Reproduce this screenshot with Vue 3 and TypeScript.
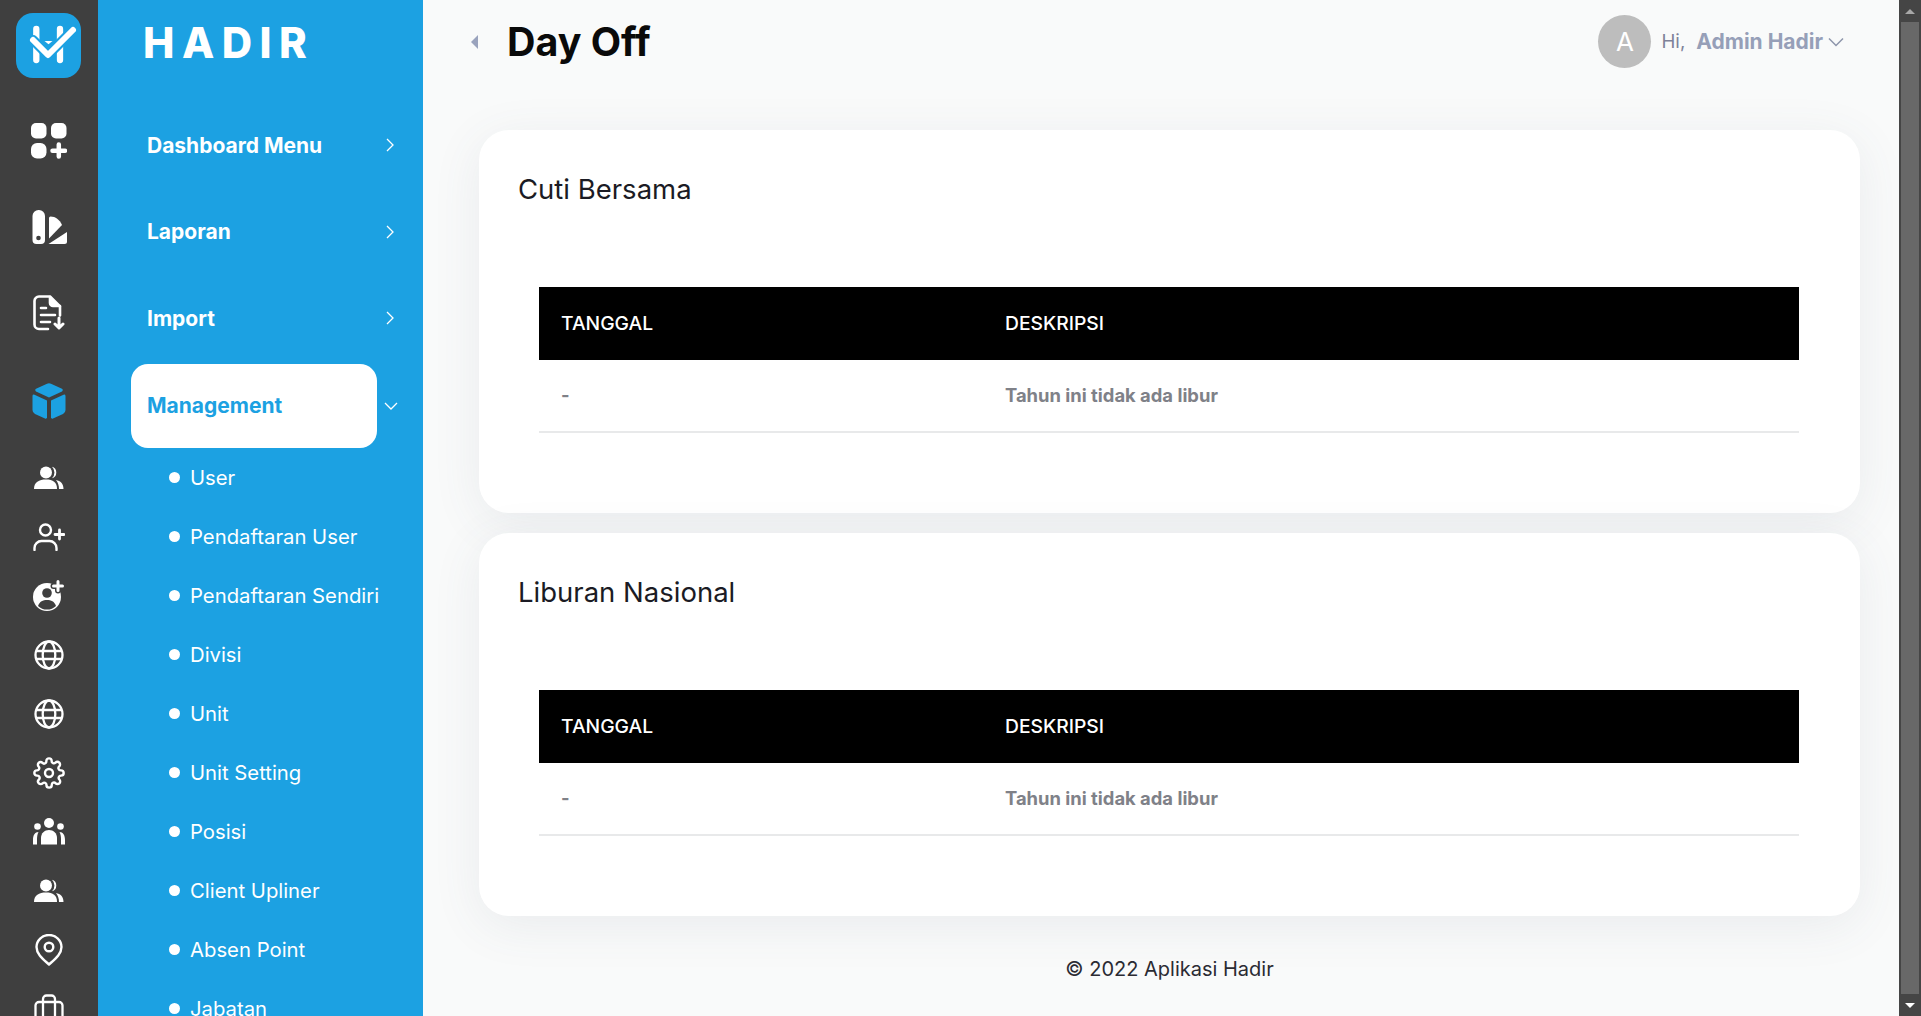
<script setup lang="ts">
const subItems: string[] = ['User','Pendaftaran User','Pendaftaran Sendiri','Divisi','Unit','Unit Setting','Posisi','Client Upliner','Absen Point','Jabatan']
const topItems: string[] = ['Dashboard Menu','Laporan','Import']
const cards: string[] = ['Cuti Bersama','Liburan Nasional']
</script>

<template>
  <div class="app">
    <nav class="rail">
      <div class="logo">
        <svg width="65" height="65" viewBox="0 0 65 65">
          <rect width="65" height="65" rx="17" fill="#1ca1e2"/>
          <path d="M20.300 16V47M44 16V47" stroke="#fff" stroke-width="6.300" stroke-linecap="round" fill="none"/>
          <path d="M28.500 28h8l-4 3.200z" fill="#fff"/>
          <path d="M17 27L32 42L57 17" stroke="#1ca1e2" stroke-width="10" stroke-linecap="round" stroke-linejoin="round" fill="none"/>
          <path d="M17 27L32 42L57 17" stroke="#fff" stroke-width="6" stroke-linecap="round" stroke-linejoin="round" fill="none"/>
        </svg>
      </div>
      <div class="rail-big">
        <svg width="36" height="36" viewBox="0 0 36 36" fill="#fff"><rect x="0" y="0" width="15.500" height="15.500" rx="5"/><rect x="20" y="0" width="15.500" height="15.500" rx="5"/><rect x="0" y="20" width="15.500" height="15.500" rx="6"/><path d="M27.800 21.500v12M21.500 27.700h12.500" stroke="#fff" stroke-width="4.500" stroke-linecap="round"/></svg>
      </div>
      <div class="rail-big">
        <svg width="36" height="36" viewBox="0 0 36 36" fill="#fff"><path d="M7.500 1h.500a6 6 0 0 1 6 6v24a4 4 0 0 1 -4 4H5.500a4 4 0 0 1 -4 -4V7a6 6 0 0 1 6 -6z"/><circle cx="7.500" cy="29" r="2.300" fill="#3f3f3f"/><path d="M18 9a1.500 1.500 0 0 1 1.500 -1.500c5 0 9 3 11.500 8.500L18 29.500z"/><path d="M36 23L17.500 35H33.500a2.500 2.500 0 0 0 2.500 -2.500z"/></svg>
      </div>
      <div class="rail-big">
        <svg width="32" height="36" viewBox="0 0 32 36" fill="none" stroke="#fff" stroke-width="2.600" stroke-linecap="round" stroke-linejoin="round"><path d="M15 34H6a4.500 4.500 0 0 1 -4.500 -4.500V6A4.500 4.500 0 0 1 6 1.500h11l10 10v9"/><path d="M17 2v6a3 3 0 0 0 3 3h7" fill="#fff"/><path d="M8 13h5M8 20h14M8 27h9"/><path d="M26 23v9M22 29l4 4 4 -4" stroke-width="3"/></svg>
      </div>
      <div class="rail-cube">
        <svg width="34" height="36" viewBox="0 0 34 36" fill="#1ca1e2"><path d="M15 .800a4.500 4.500 0 0 1 4 0l11 5a1.500 1.500 0 0 1 0 2.600L17 14.500 4 8.400a1.500 1.500 0 0 1 0 -2.600z"/><path d="M.500 13a1.500 1.500 0 0 1 2 -1.300L15 17.500v16.800a1.500 1.500 0 0 1 -2 1.300L3 31a4.500 4.500 0 0 1 -2.500 -4z"/><path d="M33.500 13a1.500 1.500 0 0 0 -2 -1.300L19 17.500v16.800a1.500 1.500 0 0 0 2 1.300L31 31a4.500 4.500 0 0 0 2.500 -4z"/></svg>
      </div>
      <div class="rail-icons">
        <div class="rail-item"><svg width="30" height="24" viewBox="0 0 30 24" fill="#fff"><circle cx="12" cy="6.500" r="6"/><path d="M0 23c0 -7 5 -9.500 12 -9.500S23 16 23 23z"/><path d="M18 .800a6 6 0 0 1 0 11.500 8 8 0 0 0 0 -11.500z"/><path d="M22 14c4.500 1 7.500 3.500 7.500 9H25c0 -3.500 -1 -6.500 -3 -9z"/></svg></div>
        <div class="rail-item"><svg width="32" height="28" viewBox="0 0 32 28" fill="none" stroke="#fff" stroke-width="2.400" stroke-linecap="round"><circle cx="12.500" cy="7" r="5.500"/><path d="M1.500 27v-2a7 7 0 0 1 7 -7h8a7 7 0 0 1 7 7v2"/><path d="M26.500 7v9M22 11.500h9" stroke-width="2.800"/></svg></div>
        <div class="rail-item"><svg width="32" height="32" viewBox="0 0 32 32"><circle cx="14" cy="17" r="14" fill="#fff"/><circle cx="14" cy="13" r="4.800" fill="#3f3f3f"/><path d="M5 26c1.500 -4.500 5 -6 9 -6s7.500 1.500 9 6a13 13 0 0 1 -18 0z" fill="#3f3f3f"/><path d="M25 1.500v9M20.500 6h9" stroke="#3f3f3f" stroke-width="6" stroke-linecap="round"/><path d="M25 1.500v9M20.500 6h9" stroke="#fff" stroke-width="3" stroke-linecap="round"/></svg></div>
        <div class="rail-item"><svg class="globe" width="30" height="30" viewBox="0 0 30 30" fill="none" stroke="#fff" stroke-width="2.300"><circle cx="15" cy="15" r="13.500"/><ellipse cx="15" cy="15" rx="6.300" ry="13.500"/><path d="M2 11h26M2 19h26"/></svg></div>
        <div class="rail-item"><svg class="globe" width="30" height="30" viewBox="0 0 30 30" fill="none" stroke="#fff" stroke-width="2.300"><circle cx="15" cy="15" r="13.500"/><ellipse cx="15" cy="15" rx="6.300" ry="13.500"/><path d="M2 11h26M2 19h26"/></svg></div>
        <div class="rail-item"><svg width="32" height="32" viewBox="0 0 24 24" fill="none" stroke="#fff" stroke-width="1.800" stroke-linejoin="round"><circle cx="12" cy="12" r="3"/><path d="M19.400 15a1.650 1.650 0 0 0 .33 1.820l.06.06a2 2 0 1 1-2.830 2.830l-.06-.06a1.650 1.650 0 0 0-2.820 1.170V21a2 2 0 1 1-4 0v-.09A1.650 1.650 0 0 0 7.270 19.700l-.06.06a2 2 0 1 1-2.830-2.830l.06-.06A1.650 1.650 0 0 0 3.270 14H3a2 2 0 1 1 0-4h.09A1.650 1.650 0 0 0 4.300 7.270l-.06-.06a2 2 0 1 1 2.830-2.830l.06.06A1.650 1.650 0 0 0 10 3.270V3a2 2 0 1 1 4 0v.09a1.650 1.650 0 0 0 2.820 1.170l.06-.06a2 2 0 1 1 2.830 2.830l-.06.06A1.650 1.650 0 0 0 20.730 10H21a2 2 0 1 1 0 4h-.09a1.650 1.650 0 0 0-1.510 1z"/></svg></div>
        <div class="rail-item"><svg width="32" height="27" viewBox="0 0 32 27" fill="#fff"><circle cx="16" cy="5" r="5"/><circle cx="4.500" cy="8.500" r="3.300"/><circle cx="27.500" cy="8.500" r="3.300"/><path d="M8 26.500V20c0 -5 3.500 -8 8 -8s8 3 8 8v6.500z"/><path d="M5.500 14c-3.500 0 -5.500 3 -5.500 8v4.500h4V21c0 -2.500 .5 -5 1.500 -7z"/><path d="M26.500 14c3.500 0 5.500 3 5.500 8v4.500h-4V21c0 -2.500 -.5 -5 -1.500 -7z"/></svg></div>
        <div class="rail-item"><svg width="30" height="24" viewBox="0 0 30 24" fill="#fff"><circle cx="12" cy="6.500" r="6"/><path d="M0 23c0 -7 5 -9.500 12 -9.500S23 16 23 23z"/><path d="M18 .800a6 6 0 0 1 0 11.500 8 8 0 0 0 0 -11.500z"/><path d="M22 14c4.500 1 7.500 3.500 7.500 9H25c0 -3.500 -1 -6.500 -3 -9z"/></svg></div>
        <div class="rail-item"><svg width="28" height="32" viewBox="0 0 28 32" fill="none" stroke="#fff" stroke-width="2.400" stroke-linejoin="round"><path d="M14 30.500C8 25 1.500 20 1.500 13a12.500 12 0 0 1 25 0c0 7 -6.500 12 -12.500 17.500z"/><circle cx="14" cy="13" r="4.300"/></svg></div>
        <div class="rail-item"><svg width="30" height="30" viewBox="0 0 30 30" fill="none" stroke="#fff" stroke-width="2.300"><rect x="1.500" y="8" width="27" height="21" rx="3.500"/><path d="M9 29V5a3.500 3.500 0 0 1 3.500 -3.500h5A3.500 3.500 0 0 1 21 5v24"/></svg></div>
      </div>
    </nav>

    <aside class="side">
      <div class="brand">HADIR</div>
      <ul class="menu">
        <li v-for="t in topItems" :key="t" class="top-item">
          <span>{{ t }}</span>
          <svg class="chev" width="10" height="14" viewBox="0 0 10 14" fill="none" stroke="#fff" stroke-width="1.300"><path d="M2 1l6 6 -6 6"/></svg>
        </li>
      </ul>
      <div class="mgmt-row">
        <div class="pill">Management</div>
        <svg class="chev-d" width="14" height="10" viewBox="0 0 14 10" fill="none" stroke="#fff" stroke-width="1.300"><path d="M1 2l6 6 6 -6"/></svg>
      </div>
      <ul class="sub">
        <li v-for="s in subItems" :key="s"><i class="dot"></i>{{ s }}</li>
      </ul>
    </aside>

    <main class="main">
      <header class="topbar">
        <div class="title-wrap">
          <svg class="back" width="7" height="14" viewBox="0 0 7 14"><path d="M7 0v14L0 7z" fill="#9aa3bd"/></svg>
          <h1>Day Off</h1>
        </div>
        <div class="user">
          <div class="avatar">A</div>
          <span class="hi">Hi,</span>
          <span class="name">Admin Hadir</span>
          <svg width="16" height="10" viewBox="0 0 16 10" fill="none" stroke="#8d95ab" stroke-width="1.500"><path d="M1 1.500l7 7 7 -7"/></svg>
        </div>
      </header>
      <section class="content">
        <article v-for="c in cards" :key="c" class="card">
          <h2>{{ c }}</h2>
          <table>
            <thead>
              <tr><th class="c1">TANGGAL</th><th>DESKRIPSI</th></tr>
            </thead>
            <tbody>
              <tr><td class="c1">-</td><td>Tahun ini tidak ada libur</td></tr>
            </tbody>
          </table>
        </article>
      </section>
      <footer class="foot">© 2022 Aplikasi Hadir</footer>
    </main>

    <div class="scrollbar">
      <div class="sb-btn"><span class="up"></span></div>
      <div class="sb-thumb"></div>
      <div class="sb-btn"><span class="down"></span></div>
    </div>
  </div>
</template>

<style>
html, body { margin: 0; height: 100%; overflow: hidden; }
</style>

<style scoped>
.app { display: flex; height: 1016px; overflow: hidden; font-family: Inter, "Noto Sans", "Liberation Sans", sans-serif; }
.rail { width: 98px; flex: none; background: #3f3f3f; display: flex; flex-direction: column; align-items: center; }
.logo { height: 65px; margin-top: 13px; }
.logo svg { display: block; margin-left: -1px; }
.rail-big { height: 36px; margin-top: 45px; display: flex; justify-content: center; }
.rail-big + .rail-big { margin-top: 50px; }
.rail-cube { height: 36px; margin-top: 52px; }
.rail-cube svg, .rail-big svg, .rail-item svg { display: block; }
.rail-icons { margin-top: 29px; display: flex; flex-direction: column; }
.rail-item { height: 59px; width: 98px; display: flex; align-items: center; justify-content: center; }
.side { width: 325px; flex: none; background: #1ca1e2; color: #fff; overflow: hidden; }
.brand { font-size: 42px; font-weight: 800; letter-spacing: 7.500px; line-height: 52px; margin: 17px 0 0 45px; white-space: nowrap; }
.menu { list-style: none; margin: 33px 0 0; padding: 0; }
.top-item { height: 86.500px; display: flex; align-items: center; justify-content: space-between; padding: 0 28px 0 49px; font-size: 21px; font-weight: 700; white-space: nowrap; }
.mgmt-row { display: flex; align-items: center; margin-top: 2.500px; padding-left: 33px; height: 84px; }
.pill { width: 246px; height: 84px; border-radius: 17px; background: #fff; color: #1ca1e2; font-size: 21px; font-weight: 700; display: flex; align-items: center; padding: 0 0 2px 16px; box-sizing: border-box; }
.chev-d { margin-left: 7px; }
.sub { list-style: none; margin: 0; padding: 0; }
.sub li { height: 59px; display: flex; align-items: center; font-size: 20.300px; padding-left: 71px; white-space: nowrap; }
.dot { width: 11px; height: 11px; border-radius: 50%; background: #fff; margin-right: 10px; flex: none; }
.main { flex: 1; background: #f9fafa; min-width: 0; display: flex; flex-direction: column; }
.topbar { height: 83px; display: flex; align-items: center; justify-content: space-between; padding: 0 55px 0 48px; flex: none; }
.title-wrap { display: flex; align-items: center; gap: 29px; }
h1 { margin: 0; font-size: 39.400px; font-weight: 700; color: #0a0a0a; }
.user { display: flex; align-items: center; }
.avatar { width: 53px; height: 53px; border-radius: 50%; background: #bdbdbd; color: #fff; font-size: 26px; display: flex; align-items: center; justify-content: center; margin-right: 10px; }
.hi { font-size: 18.700px; color: #7e8299; margin-right: 11px; }
.name { font-size: 21px; font-weight: 700; color: #969fb8; margin-right: 5px; }
.content { padding: 47px 39px 0 56px; display: flex; flex-direction: column; gap: 20px; }
.card { height: 383px; background: #fff; border-radius: 30px; box-sizing: border-box; padding: 41px 60px 0 39px; box-shadow: 0 10px 50px rgba(80,90,115,.09); }
h2 { margin: 0 0 80px; font-size: 27.500px; line-height: 36px; font-weight: 400; color: #1b1b24; }
table { width: 1260px; margin-left: 21px; border-collapse: collapse; font-size: 18.400px; }
th { background: #000; color: #fff; text-align: left; font-weight: 500; font-size: 19.300px; height: 73px; padding: 0 22px 2px; box-sizing: border-box; }
.c1 { width: 444px; }
td { height: 72px; padding: 0 22px 2px; border-bottom: 2px solid #e8e9ea; color: #7f8188; font-weight: 700; box-sizing: border-box; }
.foot { text-align: center; margin-top: 41px; font-size: 20px; color: #2b2b33; padding-left: 17px; }
.scrollbar { width: 22px; flex: none; background: #454545; display: flex; flex-direction: column; }
.sb-btn { height: 22px; display: flex; align-items: center; justify-content: center; flex: none; }
.sb-thumb { flex: 1; background: #686868; margin: 0 2px; }
.up { border-left: 5px solid transparent; border-right: 5px solid transparent; border-bottom: 5px solid #a8a8a8; }
.down { border-left: 5px solid transparent; border-right: 5px solid transparent; border-top: 5px solid #fff; }
</style>
